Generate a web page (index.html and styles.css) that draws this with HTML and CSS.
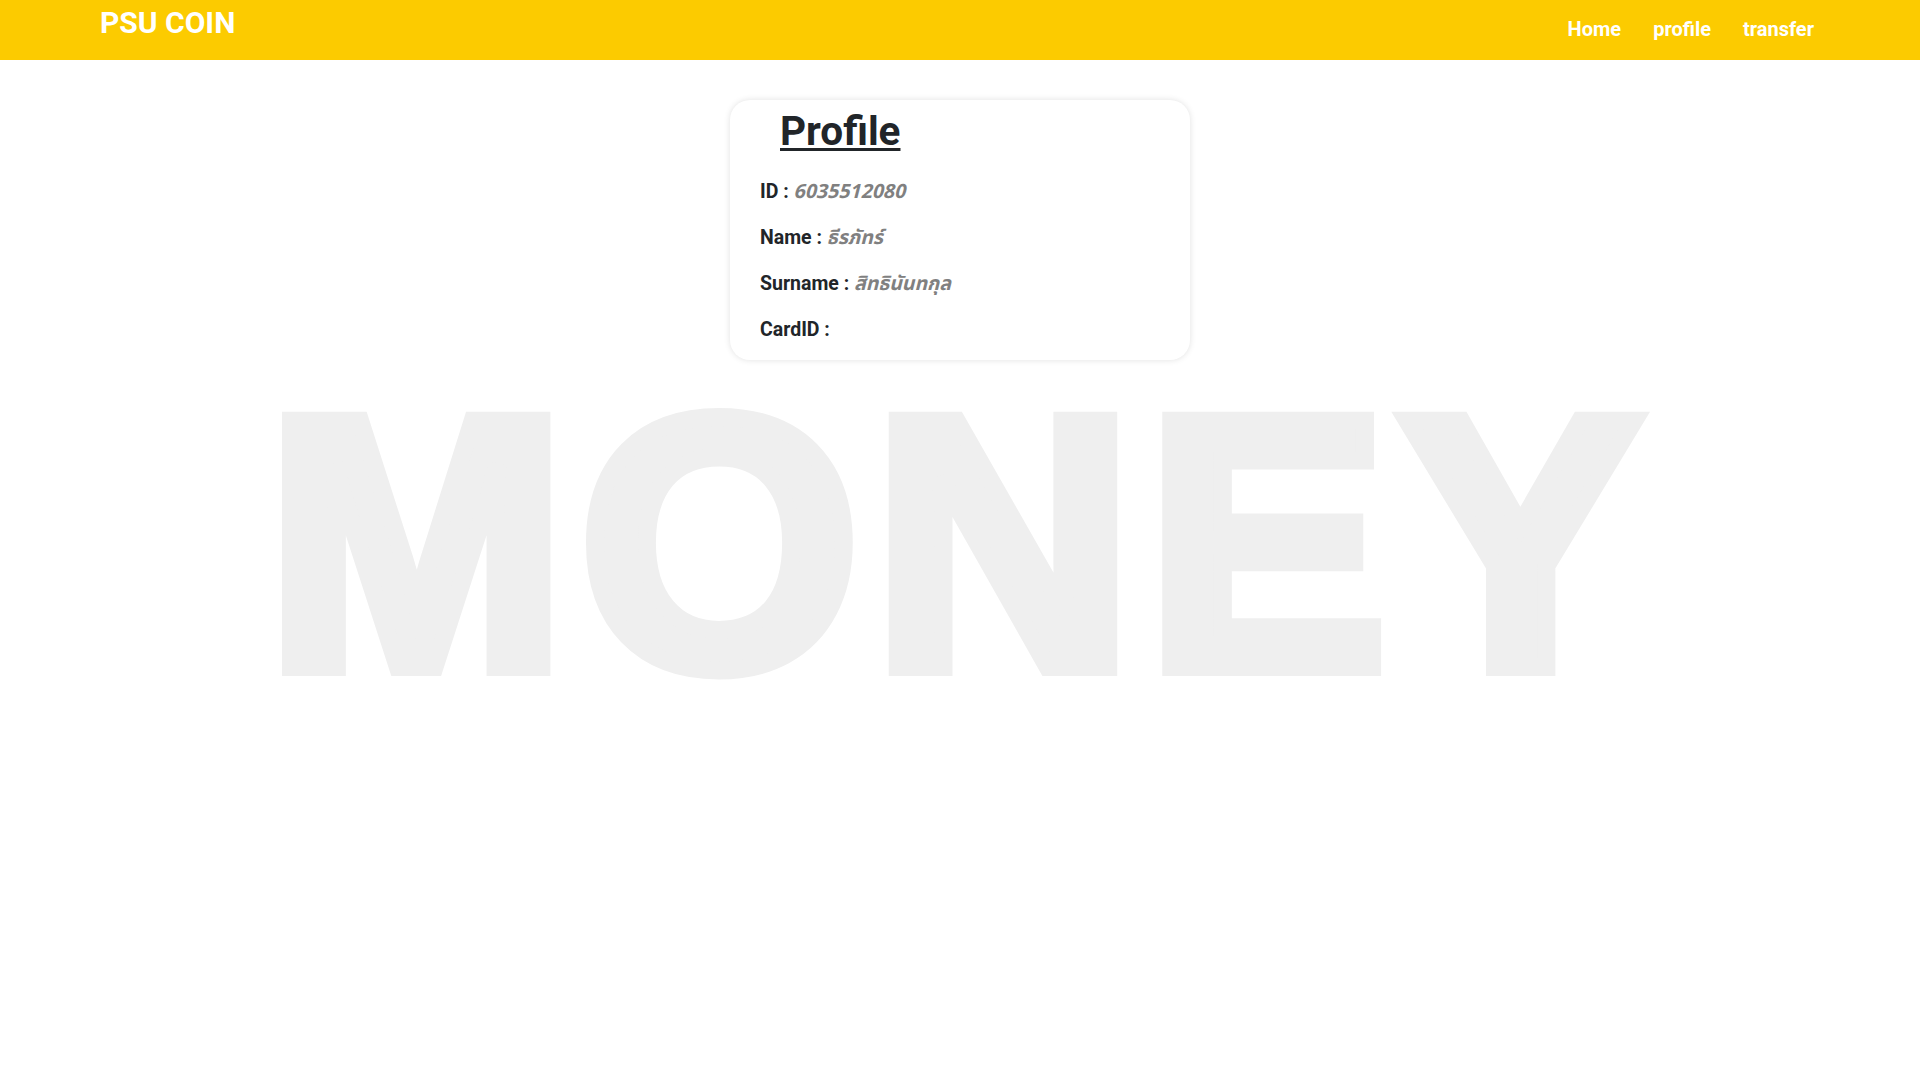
FILE: index.html
```html
<!DOCTYPE html>
<html lang="th">
<head>
<meta charset="utf-8">
<title>PSU COIN</title>
<link rel="stylesheet" href="styles.css">
</head>
<body>
<header class="topbar">
  <a class="brand" href="#">PSU COIN</a>
  <nav class="nav">
    <a class="nav-link" href="#">Home</a>
    <a class="nav-link" href="#">profile</a>
    <a class="nav-link" href="#">transfer</a>
  </nav>
</header>
<main class="main">
  <section class="card">
    <h1 class="card-title">Profile</h1>
    <div class="rows">
      <div class="row"><span class="label">ID :</span> <span class="value">6035512080</span></div>
      <div class="row"><span class="label">Name :</span> <span class="value">ธีรภัทร์</span></div>
      <div class="row"><span class="label">Surname :</span> <span class="value">สิทธินันทกุล</span></div>
      <div class="row"><span class="label">CardID :</span></div>
    </div>
  </section>
  <div class="money">MONEY</div>
</main>
</body>
</html>
```
FILE: styles.css
```css
html, body {
  margin: 0;
  padding: 0;
  background: #ffffff;
  font-family: Roboto, "Liberation Sans", sans-serif;
  color: #212529;
}

.topbar {
  height: 60px;
  background: #fccb00;
  display: flex;
  justify-content: space-between;
  align-items: flex-start;
  padding: 0 90px 0 100px;
}

.brand {
  font-size: 30px;
  font-weight: 700;
  color: #ffffff;
  text-decoration: none;
  line-height: 1;
  padding-top: 8px;
}

.nav {
  display: flex;
  padding-top: 17px;
}

.nav-link {
  color: #ffffff;
  font-weight: 700;
  font-size: 20px;
  line-height: 24px;
  text-decoration: none;
  padding: 0 16px;
}

.main {
  display: flex;
  flex-direction: column;
  align-items: center;
  padding-top: 40px;
}

.card {
  width: 460px;
  height: 260px;
  box-sizing: border-box;
  border-radius: 20px;
  background: #ffffff;
  box-shadow: 0 0 6px rgba(0, 0, 0, 0.12);
  padding: 7px 30px 0 30px;
}

.card-title {
  margin: 0 0 0 20px;
  font-size: 40.5px;
  line-height: 48px;
  font-weight: 700;
  text-decoration: underline;
  text-decoration-thickness: 3px;
  text-underline-offset: 3px;
  color: #212529;
}

.rows {
  display: flex;
  flex-direction: column;
  margin-top: 22px;
}

.row {
  height: 46px;
  line-height: 30px;
  font-size: 19.5px;
}

.label {
  font-weight: 700;
  color: #212529;
}

.value {
  font-style: italic;
  font-weight: 700;
  color: #808080;
  font-family: "Noto Sans Thai", "Noto Sans", Roboto, sans-serif;
}

.money {
  margin-top: 4px;
  margin-left: 2px;
  font-family: "Liberation Sans", Arial, sans-serif;
  font-weight: 700;
  font-size: 358px;
  line-height: 1;
  color: #efefef;
  -webkit-text-stroke: 18px #efefef;
  letter-spacing: 15px;
  white-space: nowrap;
}
```
